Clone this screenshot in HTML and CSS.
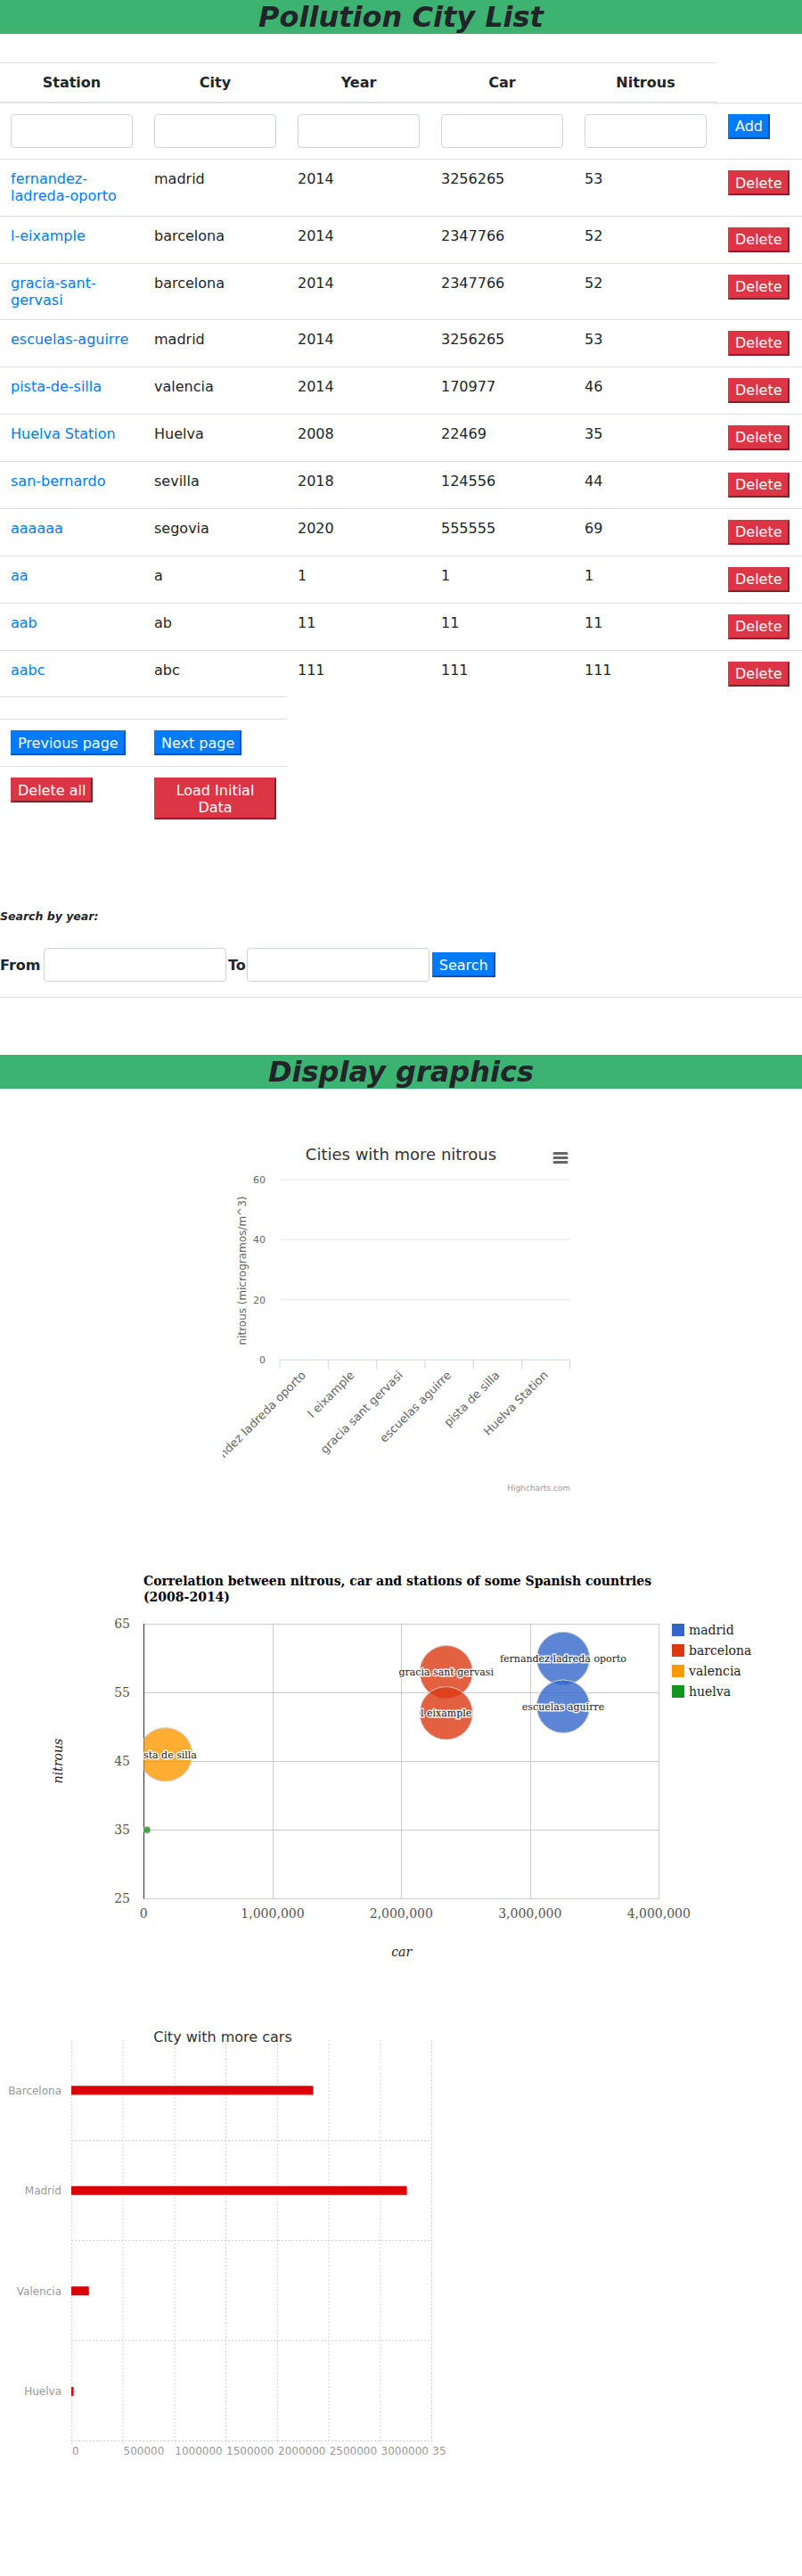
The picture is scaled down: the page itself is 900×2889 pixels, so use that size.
FILE: index.html
```html
<!DOCTYPE html>
<html lang="en">
<head>
<meta charset="utf-8">
<title>Pollution City List</title>
<link rel="stylesheet" href="styles.css">
</head>
<body>
<header class="banner"><h1>Pollution City List</h1></header>

<table class="cities">
  <colgroup>
    <col class="c"><col class="c"><col class="c"><col class="c"><col class="c"><col class="act">
  </colgroup>
  <thead>
    <tr><th>Station</th><th>City</th><th>Year</th><th>Car</th><th>Nitrous</th></tr>
  </thead>
  <tbody>
    <tr>
      <td><input class="field" type="text"></td>
      <td><input class="field" type="text"></td>
      <td><input class="field" type="text"></td>
      <td><input class="field" type="text"></td>
      <td><input class="field" type="text"></td>
      <td><button class="btn btn-blue">Add</button></td>
    </tr>
    <tr><td><a href="#">fernandez-ladreda-oporto</a></td><td>madrid</td><td>2014</td><td>3256265</td><td>53</td><td><button class="btn btn-red">Delete</button></td></tr>
    <tr><td><a href="#">l-eixample</a></td><td>barcelona</td><td>2014</td><td>2347766</td><td>52</td><td><button class="btn btn-red">Delete</button></td></tr>
    <tr><td><a href="#">gracia-sant-gervasi</a></td><td>barcelona</td><td>2014</td><td>2347766</td><td>52</td><td><button class="btn btn-red">Delete</button></td></tr>
    <tr><td><a href="#">escuelas-aguirre</a></td><td>madrid</td><td>2014</td><td>3256265</td><td>53</td><td><button class="btn btn-red">Delete</button></td></tr>
    <tr><td><a href="#">pista-de-silla</a></td><td>valencia</td><td>2014</td><td>170977</td><td>46</td><td><button class="btn btn-red">Delete</button></td></tr>
    <tr><td><a href="#">Huelva Station</a></td><td>Huelva</td><td>2008</td><td>22469</td><td>35</td><td><button class="btn btn-red">Delete</button></td></tr>
    <tr><td><a href="#">san-bernardo</a></td><td>sevilla</td><td>2018</td><td>124556</td><td>44</td><td><button class="btn btn-red">Delete</button></td></tr>
    <tr><td><a href="#">aaaaaa</a></td><td>segovia</td><td>2020</td><td>555555</td><td>69</td><td><button class="btn btn-red">Delete</button></td></tr>
    <tr><td><a href="#">aa</a></td><td>a</td><td>1</td><td>1</td><td>1</td><td><button class="btn btn-red">Delete</button></td></tr>
    <tr><td><a href="#">aab</a></td><td>ab</td><td>11</td><td>11</td><td>11</td><td><button class="btn btn-red">Delete</button></td></tr>
    <tr><td><a href="#">aabc</a></td><td>abc</td><td>111</td><td>111</td><td>111</td><td><button class="btn btn-red">Delete</button></td></tr>
    <tr class="spacer"><td></td><td></td></tr>
    <tr><td><button class="btn btn-blue">Previous page</button></td><td><button class="btn btn-blue">Next page</button></td></tr>
    <tr><td><button class="btn btn-red">Delete all</button></td><td><button class="btn btn-red">Load Initial Data</button></td></tr>
  </tbody>
</table>

<section class="search">
  <h5 class="search-title">Search by year:</h5>
  <div class="range">
    <label class="lbl-from">From</label>
    <input class="field range-field" type="text">
    <label class="lbl-to">To</label>
    <input class="field range-field range-field-2" type="text">
    <button class="btn btn-blue btn-search">Search</button>
  </div>
</section>
<hr class="divider">

<header class="banner banner-2"><h1>Display graphics</h1></header>

<svg class="chart-nitrous" width="400" height="400" viewBox="0 0 400 400">
  <text class="hc-title" x="200" y="24">Cities with more nitrous</text>
  <g class="hc-menu">
    <line x1="372" y1="16.5" x2="386" y2="16.5"/>
    <line x1="372" y1="21.5" x2="386" y2="21.5"/>
    <line x1="372" y1="26.5" x2="386" y2="26.5"/>
  </g>
  <g class="hc-grid">
    <line x1="64" y1="46" x2="390" y2="46"/>
    <line x1="64" y1="113.3" x2="390" y2="113.3"/>
    <line x1="64" y1="180.7" x2="390" y2="180.7"/>
  </g>
  <g class="hc-axis">
    <line x1="64" y1="248" x2="390" y2="248"/>
    <line x1="64" y1="248" x2="64" y2="258"/>
    <line x1="118.3" y1="248" x2="118.3" y2="258"/>
    <line x1="172.7" y1="248" x2="172.7" y2="258"/>
    <line x1="227" y1="248" x2="227" y2="258"/>
    <line x1="281.3" y1="248" x2="281.3" y2="258"/>
    <line x1="335.7" y1="248" x2="335.7" y2="258"/>
    <line x1="389.5" y1="248" x2="389.5" y2="258"/>
  </g>
  <g class="hc-yl">
    <text x="48" y="50">60</text>
    <text x="48" y="117">40</text>
    <text x="48" y="185">20</text>
    <text x="48" y="252">0</text>
  </g>
  <text class="hc-ytitle" transform="translate(26,148) rotate(-90)">nitrous (microgramos/m^3)</text>
  <g class="hc-xl">
    <text transform="translate(94,266) rotate(-45)">fernandez ladreda oporto</text>
    <text transform="translate(148.5,266) rotate(-45)">l eixample</text>
    <text transform="translate(202.8,266) rotate(-45)">gracia sant gervasi</text>
    <text transform="translate(257.2,266) rotate(-45)">escuelas aguirre</text>
    <text transform="translate(311.5,266) rotate(-45)">pista de silla</text>
    <text transform="translate(365.8,266) rotate(-45)">Huelva Station</text>
  </g>
  <text class="hc-credit" x="390" y="395">Highcharts.com</text>
</svg>

<svg class="chart-bubble" width="900" height="500" viewBox="0 0 900 500">
  <defs>
    <clipPath id="plotArea"><rect x="161.3" y="81" width="578" height="308.3"/></clipPath>
  </defs>
  <text class="gc-title" x="161" y="38">Correlation between nitrous, car and stations of some Spanish countries</text>
  <text class="gc-title" x="161" y="56">(2008-2014)</text>
  <g class="gc-grid">
    <line x1="161.3" y1="81.5" x2="739.3" y2="81.5"/>
    <line x1="161.3" y1="158.5" x2="739.3" y2="158.5"/>
    <line x1="161.3" y1="235.5" x2="739.3" y2="235.5"/>
    <line x1="161.3" y1="312.5" x2="739.3" y2="312.5"/>
    <line x1="161.3" y1="389.5" x2="739.3" y2="389.5"/>
    <line x1="306.5" y1="81" x2="306.5" y2="389.5"/>
    <line x1="450.5" y1="81" x2="450.5" y2="389.5"/>
    <line x1="595.5" y1="81" x2="595.5" y2="389.5"/>
    <line x1="739.5" y1="81" x2="739.5" y2="389.5"/>
  </g>
  <line class="gc-base" x1="161.5" y1="81" x2="161.5" y2="389.5"/>
  <g clip-path="url(#plotArea)">
    <circle class="bub bub-bcn" cx="500.7" cy="135.3" r="29.7"/>
    <circle class="bub bub-bcn" cx="500.7" cy="181.3" r="29.7"/>
    <circle class="bub bub-mad" cx="632" cy="120" r="29.7"/>
    <circle class="bub bub-mad" cx="632" cy="173.7" r="29.7"/>
    <circle class="bub bub-val" cx="185.7" cy="227.7" r="30"/>
    <circle class="bub bub-hue" cx="165" cy="312.3" r="4"/>
    <g class="gc-blabel">
      <text x="500.7" y="139.3">gracia sant gervasi</text>
      <text x="500.7" y="185.3">l eixample</text>
      <text x="632" y="124">fernandez ladreda oporto</text>
      <text x="632" y="177.7">escuelas aguirre</text>
      <text x="185.7" y="231.7">pista de silla</text>
    </g>
  </g>
  <g class="gc-yl">
    <text x="146" y="86">65</text>
    <text x="146" y="163">55</text>
    <text x="146" y="240">45</text>
    <text x="146" y="317">35</text>
    <text x="146" y="394">25</text>
  </g>
  <g class="gc-xl">
    <text x="161.3" y="410.7">0</text>
    <text x="306" y="410.7">1,000,000</text>
    <text x="450.3" y="410.7">2,000,000</text>
    <text x="594.8" y="410.7">3,000,000</text>
    <text x="739.3" y="410.7">4,000,000</text>
  </g>
  <text class="gc-atitle" transform="translate(70,235) rotate(-90)">nitrous</text>
  <text class="gc-atitle" x="450.7" y="453.5">car</text>
  <g class="gc-legend">
    <rect class="lg-mad" x="754" y="81" width="14" height="14"/>
    <text x="773" y="93">madrid</text>
    <rect class="lg-bcn" x="754" y="104" width="14" height="14"/>
    <text x="773" y="116">barcelona</text>
    <rect class="lg-val" x="754" y="127" width="14" height="14"/>
    <text x="773" y="139">valencia</text>
    <rect class="lg-hue" x="754" y="150" width="14" height="14"/>
    <text x="773" y="162">huelva</text>
  </g>
</svg>

<svg class="chart-cars" width="500" height="500" viewBox="0 0 500 500">
  <g class="cj-grid">
    <line x1="80.5" y1="26" x2="80.5" y2="479"/>
    <line x1="138" y1="26" x2="138" y2="479"/>
    <line x1="196" y1="26" x2="196" y2="479"/>
    <line x1="253.5" y1="26" x2="253.5" y2="479"/>
    <line x1="311.5" y1="26" x2="311.5" y2="479"/>
    <line x1="369" y1="26" x2="369" y2="479"/>
    <line x1="427" y1="26" x2="427" y2="479"/>
    <line x1="484.5" y1="26" x2="484.5" y2="479"/>
    <line x1="80" y1="138.5" x2="485" y2="138.5"/>
    <line x1="80" y1="250.5" x2="485" y2="250.5"/>
    <line x1="80" y1="363" x2="485" y2="363"/>
    <line x1="80" y1="475.5" x2="485" y2="475.5"/>
  </g>
  <text class="cj-title" x="250" y="28">City with more cars</text>
  <g class="cj-bar">
    <rect x="80" y="77.3" width="271.5" height="10"/>
    <rect x="80" y="189.7" width="376.6" height="10"/>
    <rect x="80" y="302.3" width="19.8" height="10"/>
    <rect x="80" y="415" width="2.6" height="10"/>
  </g>
  <g class="cj-yl">
    <text x="69" y="86.5">Barcelona</text>
    <text x="69" y="199">Madrid</text>
    <text x="69" y="311.5">Valencia</text>
    <text x="69" y="424">Huelva</text>
  </g>
  <g class="cj-xl">
    <text x="81" y="491">0</text>
    <text x="138.5" y="491">500000</text>
    <text x="196.3" y="491">1000000</text>
    <text x="254" y="491">1500000</text>
    <text x="312" y="491">2000000</text>
    <text x="369.7" y="491">2500000</text>
    <text x="427.5" y="491">3000000</text>
    <text x="485.3" y="491">3500000</text>
  </g>
</svg>
</body>
</html>
```

FILE: styles.css
```css
html, body {
  margin: 0;
  padding: 0;
}

body {
  font-family: "DejaVu Sans", "Noto Sans", sans-serif;
  font-size: 16px;
  line-height: 1.2;
  color: #212529;
  background: #fff;
  padding-bottom: 127px;
}

/* Green banners */
.banner {
  background: #3cb371;
  height: 38px;
}

.banner h1 {
  margin: 0;
  font-size: 32px;
  line-height: 38px;
  font-weight: bold;
  font-style: italic;
  text-align: center;
  color: #212529;
}

.banner-2 {
  margin-top: 64px;
}

/* Table */
.cities {
  border-collapse: collapse;
  table-layout: fixed;
  width: 900px;
  margin-top: 32px;
}

.cities col.c {
  width: 161px;
}

.cities col.act {
  width: 95px;
}

.cities th {
  padding: 12px;
  border-top: 1px solid #dee2e6;
  border-bottom: 2px solid #dee2e6;
  font-weight: bold;
  text-align: center;
  vertical-align: bottom;
}

.cities td {
  padding: 12px;
  border-top: 1px solid #dee2e6;
  vertical-align: top;
  text-align: left;
}

.cities a {
  color: #007bff;
  text-decoration: none;
}

.field {
  display: block;
  box-sizing: border-box;
  width: 100%;
  height: 38px;
  margin: 0;
  padding: 6px 12px;
  border: 1px solid #ced4da;
  border-radius: 4px;
  background: #fff;
  font: inherit;
}

/* Buttons */
.btn {
  font-family: inherit;
  font-size: 16px;
  line-height: 19.2px;
  padding: 2.4px 6px;
  margin: 0;
  border-width: 2px;
  border-style: outset;
  border-radius: 0;
  color: #fff;
  cursor: pointer;
}

.btn-blue {
  background: #007bff;
  border-color: #007bff;
}

.btn-red {
  background: #dc3545;
  border-color: #dc3545;
}

/* Search */
.search {
  margin-top: 89px;
}

.search-title {
  margin: 0;
  font-size: 12.5px;
  line-height: 15px;
  font-weight: bold;
  font-style: italic;
}

.range {
  display: flex;
  align-items: center;
  margin-top: 28px;
}

.range label {
  font-weight: bold;
}

.lbl-from {
  margin-right: 3.5px;
}

.range-field {
  width: 205px;
}

.lbl-to {
  margin-left: 2px;
  margin-right: 1px;
}

.btn-search {
  margin-left: 3px;
}

.divider {
  margin: 17px 0 0;
  border: 0;
  border-top: 1px solid #dee2e6;
  height: 0;
}

/* Chart 1 (Highcharts style) */
.chart-nitrous {
  display: block;
  margin: 56px auto 0;
  font-family: "DejaVu Sans", sans-serif;
}

.hc-title {
  font-size: 18px;
  fill: #333;
  text-anchor: middle;
}

.hc-menu line {
  stroke: #666;
  stroke-width: 3;
  stroke-linecap: round;
}

.hc-grid line {
  stroke: #e6e6e6;
  stroke-width: 1;
}

.hc-axis line {
  stroke: #ccd6eb;
  stroke-width: 1;
}

.hc-yl text {
  font-size: 11px;
  fill: #666;
  text-anchor: end;
}

.hc-ytitle {
  font-size: 12px;
  fill: #666;
  text-anchor: middle;
}

.hc-xl text {
  font-size: 13px;
  fill: #666;
  text-anchor: end;
}

.hc-credit {
  font-size: 9px;
  fill: #999;
  text-anchor: end;
}

/* Chart 2 (bubble) */
.chart-bubble {
  display: block;
  margin-top: 63px;
  font-family: "DejaVu Serif", "Liberation Serif", serif;
}

.gc-title {
  font-size: 14px;
  font-weight: bold;
  fill: #000;
}

.gc-grid line {
  stroke: #ccc;
  stroke-width: 1;
}

.gc-base {
  stroke: #333;
  stroke-width: 1;
}

.bub {
  fill-opacity: 0.8;
  stroke: #ccc;
  stroke-width: 1;
}

.bub-mad { fill: #3366cc; }
.bub-bcn { fill: #dc3912; }
.bub-val { fill: #ff9900; }
.bub-hue { fill: #109618; }

.gc-blabel text {
  font-size: 11px;
  fill: #222;
  text-anchor: middle;
  stroke: #fff;
  stroke-width: 3px;
  stroke-opacity: 0.85;
  paint-order: stroke;
}

.gc-yl text {
  font-size: 14px;
  fill: #555;
  text-anchor: end;
}

.gc-xl text {
  font-size: 14px;
  fill: #555;
  text-anchor: middle;
}

.gc-atitle {
  font-size: 14px;
  font-style: italic;
  fill: #222;
  text-anchor: middle;
}

.gc-legend text {
  font-size: 14px;
  fill: #222;
}

.lg-mad { fill: #3366cc; }
.lg-bcn { fill: #dc3912; }
.lg-val { fill: #ff9900; }
.lg-hue { fill: #109618; }

/* Chart 3 (bar) */
.chart-cars {
  display: block;
  margin-top: 22px;
  font-family: "DejaVu Sans", sans-serif;
}

.cj-grid line {
  stroke: #d0d0d0;
  stroke-width: 1;
  stroke-dasharray: 2 2;
}

.cj-title {
  font-size: 16px;
  fill: #333;
  text-anchor: middle;
}

.cj-bar rect {
  fill: #d90008;
}

.cj-yl text {
  font-size: 12px;
  fill: #999;
  text-anchor: end;
}

.cj-xl text {
  font-size: 12px;
  fill: #999;
  text-anchor: start;
}
```
